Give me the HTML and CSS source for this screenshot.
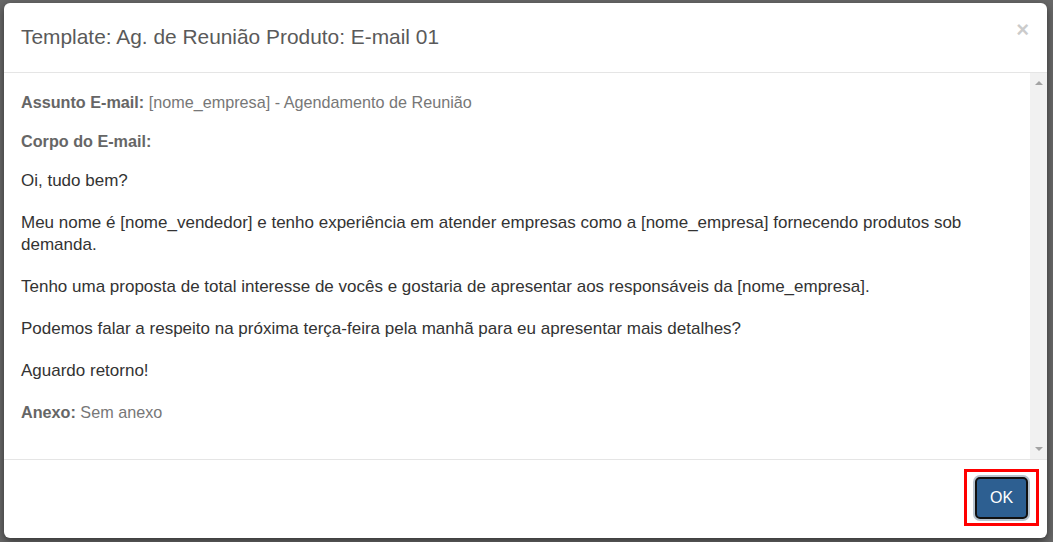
FILE: index.html
```html
<!DOCTYPE html>
<html lang="pt-BR">
<head>
  <meta charset="UTF-8">
  <title>Template: Ag. de Reunião Produto: E-mail 01</title>
  <link rel="stylesheet" href="styles.css">
</head>
<body>
  <div class="modal">
    <div class="modal-header">
      <h4 class="modal-title">Template: Ag. de Reunião Produto: E-mail 01</h4>
      <button class="close" type="button">&times;</button>
    </div>

    <div class="modal-body">
      <div class="body-content">
        <p class="meta"><b>Assunto E-mail:</b> [nome_empresa] - Agendamento de Reunião</p>
        <p class="meta"><b>Corpo do E-mail:</b></p>

        <div class="mail">
          <p>Oi, tudo bem?</p>
          <p>Meu nome é [nome_vendedor] e tenho experiência em atender empresas como a [nome_empresa] fornecendo produtos sob demanda.</p>
          <p>Tenho uma proposta de total interesse de vocês e gostaria de apresentar aos responsáveis da [nome_empresa].</p>
          <p>Podemos falar a respeito na próxima terça-feira pela manhã para eu apresentar mais detalhes?</p>
          <p>Aguardo retorno!</p>
        </div>

        <p class="meta"><b>Anexo:</b> Sem anexo</p>
      </div>

      <div class="scrollbar">
        <span class="arrow-up"></span>
        <span class="arrow-down"></span>
      </div>
    </div>

    <div class="modal-footer">
      <div class="highlight">
        <button class="btn-ok" type="button">OK</button>
      </div>
    </div>
  </div>
</body>
</html>
```

FILE: styles.css
```css
* {
  box-sizing: border-box;
}

body {
  margin: 0;
  padding: 3px 6px 4px 4px;
  background: #686868;
  font-family: "Liberation Sans", Arial, sans-serif;
  height: 100vh;
}

.modal {
  background: white;
  height: 535px;
  border-radius: 6px;
  box-shadow: 0 3px 9px rgba(0, 0, 0, 0.5);
  display: flex;
  flex-direction: column;
  overflow: hidden;
}

.modal-header {
  display: flex;
  align-items: center;
  justify-content: space-between;
  height: 70px;
  padding: 0 17px 2px 17px;
  border-bottom: 1px solid #e5e5e5;
}

.modal-title {
  margin: 0;
  font-size: 20.9px;
  font-weight: normal;
  color: #5a5a5a;
}

.close {
  background: none;
  border: none;
  padding: 0;
  margin-top: -14px;
  margin-right: 1px;
  font-size: 22px;
  font-weight: bold;
  line-height: 1;
  color: #000;
  opacity: 0.2;
  font-family: "Liberation Sans", Arial, sans-serif;
  cursor: pointer;
}

.modal-body {
  flex: 1;
  display: flex;
  overflow: hidden;
}

.body-content {
  flex: 1;
  padding: 19px 17px 10px 17px;
}

.scrollbar {
  width: 17px;
  background: #f1f1f1;
  display: flex;
  flex-direction: column;
  justify-content: space-between;
  align-items: center;
  padding: 8px 0 8px 0;
}

.arrow-up,
.arrow-down {
  width: 0;
  height: 0;
  border-left: 4px solid transparent;
  border-right: 4px solid transparent;
}

.arrow-up {
  border-bottom: 4px solid #a3a3a3;
}

.arrow-down {
  border-top: 4px solid #a3a3a3;
}

.meta {
  margin: 0 0 19px;
  font-size: 16.2px;
  line-height: 20px;
  color: #777;
}

.meta b {
  color: #666;
}

.mail {
  color: #333;
  font-size: 17px;
}

.mail p {
  margin: 0 0 20px;
  line-height: 22px;
}

.modal-footer {
  height: 79px;
  border-top: 1px solid #e5e5e5;
  display: flex;
  justify-content: flex-end;
  align-items: flex-start;
  padding: 9px 8px 0 0;
}

.highlight {
  border: 3px solid #ff0000;
  padding: 5px 8px 4px 8px;
}

.btn-ok {
  display: block;
  width: 53px;
  height: 42px;
  background: #2d5f91;
  color: #fff;
  font-family: "Liberation Sans", Arial, sans-serif;
  font-size: 16px;
  border: 2px solid #111;
  border-radius: 5px;
  box-shadow: 0 0 0 2px #b8c4cf;
  cursor: pointer;
}
```
